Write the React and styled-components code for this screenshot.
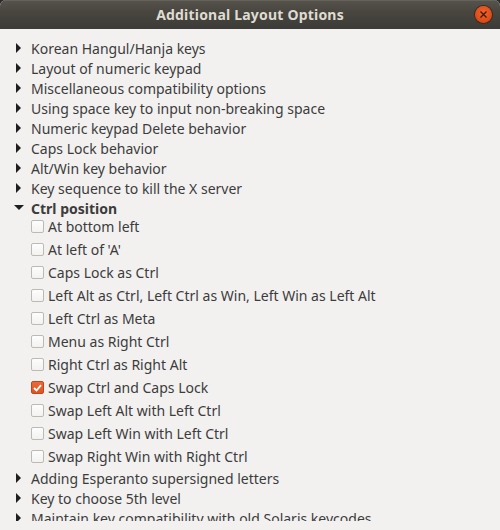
import React from "react";
import styled, { createGlobalStyle } from "styled-components";

const Global = createGlobalStyle`
  html, body { margin: 0; padding: 0; }
  body {
    width: 500px; height: 530px; overflow: hidden;
    background: #2b2b2b;
    font-family: "Noto Sans", "DejaVu Sans", sans-serif;
  }
`;

const Window = styled.div`
  width: 500px; height: 530px;
  display: flex; flex-direction: column;
  background: #f2f1f0;
  border-radius: 6px 6px 0 0;
  overflow: hidden;
`;

const TitleBar = styled.div`
  height: 29px; flex: none;
  position: relative;
  display: flex; align-items: center; justify-content: center;
  background: linear-gradient(to bottom, #57544d 0%, #48463f 40%, #3c3b37 100%);
  color: #dfdbd2;
  font-weight: bold;
  font-size: 14px;
  letter-spacing: 0.2px;
  box-shadow: inset 0 1px 0 #65625a;
`;

const Close = styled.div`
  position: absolute; right: 8px; top: 6px;
  width: 17px; height: 17px; border-radius: 50%;
  background: radial-gradient(circle at 50% 40%, #f0662f, #dd4814 70%);
  box-shadow: 0 0 0 1px #3a2a22;
  display: flex; align-items: center; justify-content: center;
`;

const Body = styled.div`
  flex: 1;
  padding: 9px 0 9px;
  display: flex; flex-direction: column;
  min-height: 0;
`;

const List = styled.div`
  flex: 1;
  min-height: 0;
  overflow: hidden;
  display: flex; flex-direction: column;
  color: #3c3c3c;
  font-size: 14px;
`;

const ExpRow = styled.div`
  height: 20px; flex: none; display: flex; align-items: center;
  padding-left: 16px;
  font-weight: ${p => (p.$bold ? "bold" : "normal")};
  white-space: nowrap;
`;

const Arrow = styled.span`
  width: 15px; flex: none; display: flex; align-items: center;
  margin-left: ${p => (p.$open ? "-2px" : "0")};
  margin-right: ${p => (p.$open ? "2px" : "0")};
`;

const Group = styled.div`
  margin-top: -3px;
  display: flex; flex-direction: column;
  flex: none;
`;

const CheckRow = styled.label`
  height: 23px; display: flex; align-items: center;
  padding-left: 31px;
  white-space: nowrap;
`;

const Box = styled.span`
  width: 11px; height: 11px; flex: none;
  border: 1px solid ${p => (p.$checked ? "#c2461c" : "#bdbab5")};
  border-radius: 2px;
  background: ${p => (p.$checked ? "linear-gradient(#ec6a37, #dd5422)" : "linear-gradient(#fdfdfd, #f3f2f1)")};
  margin-right: 4px;
  display: flex; align-items: center; justify-content: center;
`;

const RightTri = () => (
  <svg width="6" height="10" viewBox="0 0 6 10"><path d="M0 0 L5 5 L0 10 Z" fill="#1f1f1f" /></svg>
);
const DownTri = () => (
  <svg width="10" height="6" viewBox="0 0 10 6"><path d="M0 0 L10 0 L5 5 Z" fill="#1f1f1f" /></svg>
);

const before = [
  "Korean Hangul/Hanja keys",
  "Layout of numeric keypad",
  "Miscellaneous compatibility options",
  "Using space key to input non-breaking space",
  "Numeric keypad Delete behavior",
  "Caps Lock behavior",
  "Alt/Win key behavior",
  "Key sequence to kill the X server",
];
const options = [
  ["At bottom left", false],
  ["At left of 'A'", false],
  ["Caps Lock as Ctrl", false],
  ["Left Alt as Ctrl, Left Ctrl as Win, Left Win as Left Alt", false],
  ["Left Ctrl as Meta", false],
  ["Menu as Right Ctrl", false],
  ["Right Ctrl as Right Alt", false],
  ["Swap Ctrl and Caps Lock", true],
  ["Swap Left Alt with Left Ctrl", false],
  ["Swap Left Win with Left Ctrl", false],
  ["Swap Right Win with Right Ctrl", false],
];
const after = [
  "Adding Esperanto supersigned letters",
  "Key to choose 5th level",
  "Maintain key compatibility with old Solaris keycodes",
];

export default function App() {
  return (
    <>
      <Global />
      <Window>
        <TitleBar>
          Additional Layout Options
          <Close>
            <svg width="7" height="7" viewBox="0 0 7 7">
              <path d="M0.5 0.5 L6.5 6.5 M6.5 0.5 L0.5 6.5" stroke="#3a1a0c" strokeWidth="1.3" />
            </svg>
          </Close>
        </TitleBar>
        <Body>
          <List>
            {before.map(t => (
              <ExpRow key={t}><Arrow><RightTri /></Arrow>{t}</ExpRow>
            ))}
            <ExpRow $bold><Arrow $open><DownTri /></Arrow>Ctrl position</ExpRow>
            <Group>
              {options.map(([t, c]) => (
                <CheckRow key={t}>
                  <Box $checked={c}>
                    {c && (
                      <svg width="9" height="8" viewBox="0 0 9 8">
                        <path d="M1 4 L3.5 6.5 L8 1.2" fill="none" stroke="#fff" strokeWidth="1.8" />
                      </svg>
                    )}
                  </Box>
                  {t}
                </CheckRow>
              ))}
            </Group>
            {after.map(t => (
              <ExpRow key={t}><Arrow><RightTri /></Arrow>{t}</ExpRow>
            ))}
          </List>
        </Body>
      </Window>
    </>
  );
}
